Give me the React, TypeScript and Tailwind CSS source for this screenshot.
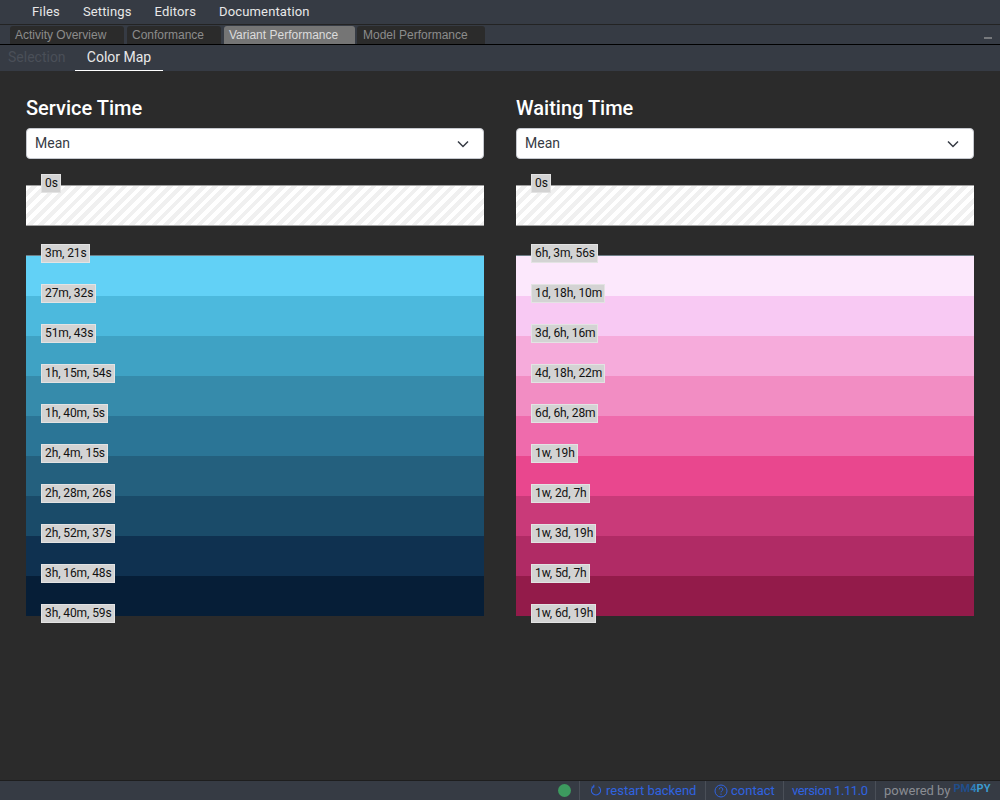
const SERVICE_ROWS = [
  { label: '3m, 21s', color: '#62d1f6' },
  { label: '27m, 32s', color: '#4cb9dd' },
  { label: '51m, 43s', color: '#3fa2c4' },
  { label: '1h, 15m, 54s', color: '#368bab' },
  { label: '1h, 40m, 5s', color: '#2b7596' },
  { label: '2h, 4m, 15s', color: '#24607e' },
  { label: '2h, 28m, 26s', color: '#1a4b69' },
  { label: '2h, 52m, 37s', color: '#0f3150' },
  { label: '3h, 16m, 48s', color: '#061e37' },
];

const WAITING_ROWS = [
  { label: '6h, 3m, 56s', color: '#fce8fc' },
  { label: '1d, 18h, 10m', color: '#f8c9f3' },
  { label: '3d, 6h, 16m', color: '#f6abdb' },
  { label: '4d, 18h, 22m', color: '#f28dc3' },
  { label: '6d, 6h, 28m', color: '#ef6bac' },
  { label: '1w, 19h', color: '#e9478e' },
  { label: '1w, 2d, 7h', color: '#c93a79' },
  { label: '1w, 3d, 19h', color: '#b02b65' },
  { label: '1w, 5d, 7h', color: '#931b4a' },
];

function Tag({ label }: { label: string }) {
  return (
    <span className="absolute left-[15px] top-[-12px] h-[19px] whitespace-nowrap border border-[#e3e3e3] bg-[#d3d3d3] pl-[3px] pr-[2px] text-[12px] leading-[17px] tracking-[-0.1px] text-[#111]">
      {label}
    </span>
  );
}

function ColorColumn({
  title,
  rows,
  lastLabel,
}: {
  title: string;
  rows: { label: string; color: string }[];
  lastLabel: string;
}) {
  return (
    <div className="w-[458px]">
      <h2 className="h-[23px] text-[20px] font-medium leading-[23px] text-white">{title}</h2>
      <div className="mt-[8px] flex h-[31px] items-center justify-between rounded-[4px] border border-[#c5c8ce] bg-white pl-[8px] pr-[14px] text-[14px] text-[#363b44]">
        <span>Mean</span>
        <svg width="12" height="8" viewBox="0 0 12 8" fill="none" stroke="#363b44" strokeWidth="1.5">
          <path d="M1 1.5l5 5 5-5" />
        </svg>
      </div>
      <div className="relative mt-[26px] h-[41px] border-y border-[#a0a0a0] bg-[repeating-linear-gradient(135deg,#ffffff_0px,#ffffff_4px,#f0f0f0_4px,#f0f0f0_8px)]">
        <Tag label="0s" />
      </div>
      <div className="mt-[29px] border-t border-[#6f7f88]">
        {rows.map((row) => (
          <div key={row.label} className="relative h-[40px]" style={{ backgroundColor: row.color }}>
            <Tag label={row.label} />
          </div>
        ))}
        <div className="relative h-0">
          <Tag label={lastLabel} />
        </div>
      </div>
    </div>
  );
}

export default function App() {
  return (
    <div className="flex h-[800px] w-[1000px] flex-col overflow-hidden bg-[#2b2b2b] font-['Roboto',sans-serif]">
      <nav className="flex h-[24px] items-center gap-[23px] bg-[#363b44] pl-[32px] text-[13px] tracking-[0.15px] text-[#e8e8e8]">
        <span>Files</span>
        <span>Settings</span>
        <span>Editors</span>
        <span>Documentation</span>
      </nav>
      <div className="flex h-[20px] items-end border-t border-[#232323] bg-[#363b44] pl-[10px] font-['Liberation_Sans',sans-serif] text-[12px]">
        <span className="flex h-[18px] w-[114px] items-center rounded-t-[3px] bg-[#2b2b2b] pl-[5px] text-[#8c8c8c]">Activity Overview</span>
        <span className="ml-[3px] flex h-[18px] w-[94px] items-center rounded-t-[3px] bg-[#2b2b2b] pl-[5px] text-[#8c8c8c]">Conformance</span>
        <span className="ml-[3px] flex h-[18px] w-[131px] items-center rounded-t-[3px] bg-[#757575] pl-[5px] text-[#dcdcdc]">Variant Performance</span>
        <span className="ml-[2px] flex h-[18px] w-[128px] items-center rounded-t-[3px] bg-[#2b2b2b] pl-[6px] text-[#8c8c8c]">Model Performance</span>
        <span className="mb-[5px] ml-auto mr-[8px] h-[2px] w-[8px] bg-[#77797d]" />
      </div>
      <div className="flex h-[27px] border-t border-black bg-[#363b44] text-[14px]">
        <span className="w-[75px] pl-[8px] leading-[24px] text-[#4a4f58]">Selection</span>
        <span className="h-[26px] w-[88px] border-b border-white text-center leading-[24px] text-[#e8e8e8]">Color Map</span>
      </div>
      <main className="flex flex-1 gap-[32px] px-[26px] pt-[26px]">
        <ColorColumn title="Service Time" rows={SERVICE_ROWS} lastLabel="3h, 40m, 59s" />
        <ColorColumn title="Waiting Time" rows={WAITING_ROWS} lastLabel="1w, 6d, 19h" />
      </main>
      <footer className="flex h-[20px] items-center justify-end border-t border-[#1e1e1e] bg-[#363b44] text-[13px] text-[#2f63e0]">
        <span className="h-[13px] w-[13px] rounded-full bg-[#3d9a5f]" />
        <span className="ml-[8px] flex h-full w-[126px] items-center gap-[4px] border-l border-[#4a4f58] pl-[10px]">
          <svg width="12" height="13" viewBox="0 0 12 13" fill="none" stroke="currentColor" strokeWidth="1.1">
            <path d="M3.5 2.6a4.6 4.6 0 1 0 5 0" />
            <path d="M3.8 0.8v2.2H1.6" />
          </svg>
          restart backend
        </span>
        <span className="flex h-full w-[78px] items-center gap-[3px] border-l border-[#4a4f58] pl-[8px]">
          <svg width="14" height="14" viewBox="0 0 14 14" fill="none" stroke="currentColor" strokeWidth="1">
            <circle cx="7" cy="7" r="6" />
            <path d="M5.2 5.4a1.8 1.8 0 1 1 2.6 1.6c-.6.3-.8.7-.8 1.3" />
            <path d="M7 9.6v1.2" />
          </svg>
          contact
        </span>
        <span className="flex h-full w-[92px] items-center border-l border-[#4a4f58] pl-[8px] tracking-[-0.4px]">version 1.11.0</span>
        <span className="flex h-full w-[125px] items-center gap-[3px] border-l border-[#4a4f58] pl-[8px] text-[#8a8d93]">
          powered by
          <span className="mb-[4px] text-[11px] font-bold leading-none">
            <span className="text-[#1f4e8c]">PM</span>
            <span className="text-[#2f7fb8]">4</span>
            <span className="text-[#3b9ad0]">PY</span>
          </span>
        </span>
      </footer>
    </div>
  );
}
